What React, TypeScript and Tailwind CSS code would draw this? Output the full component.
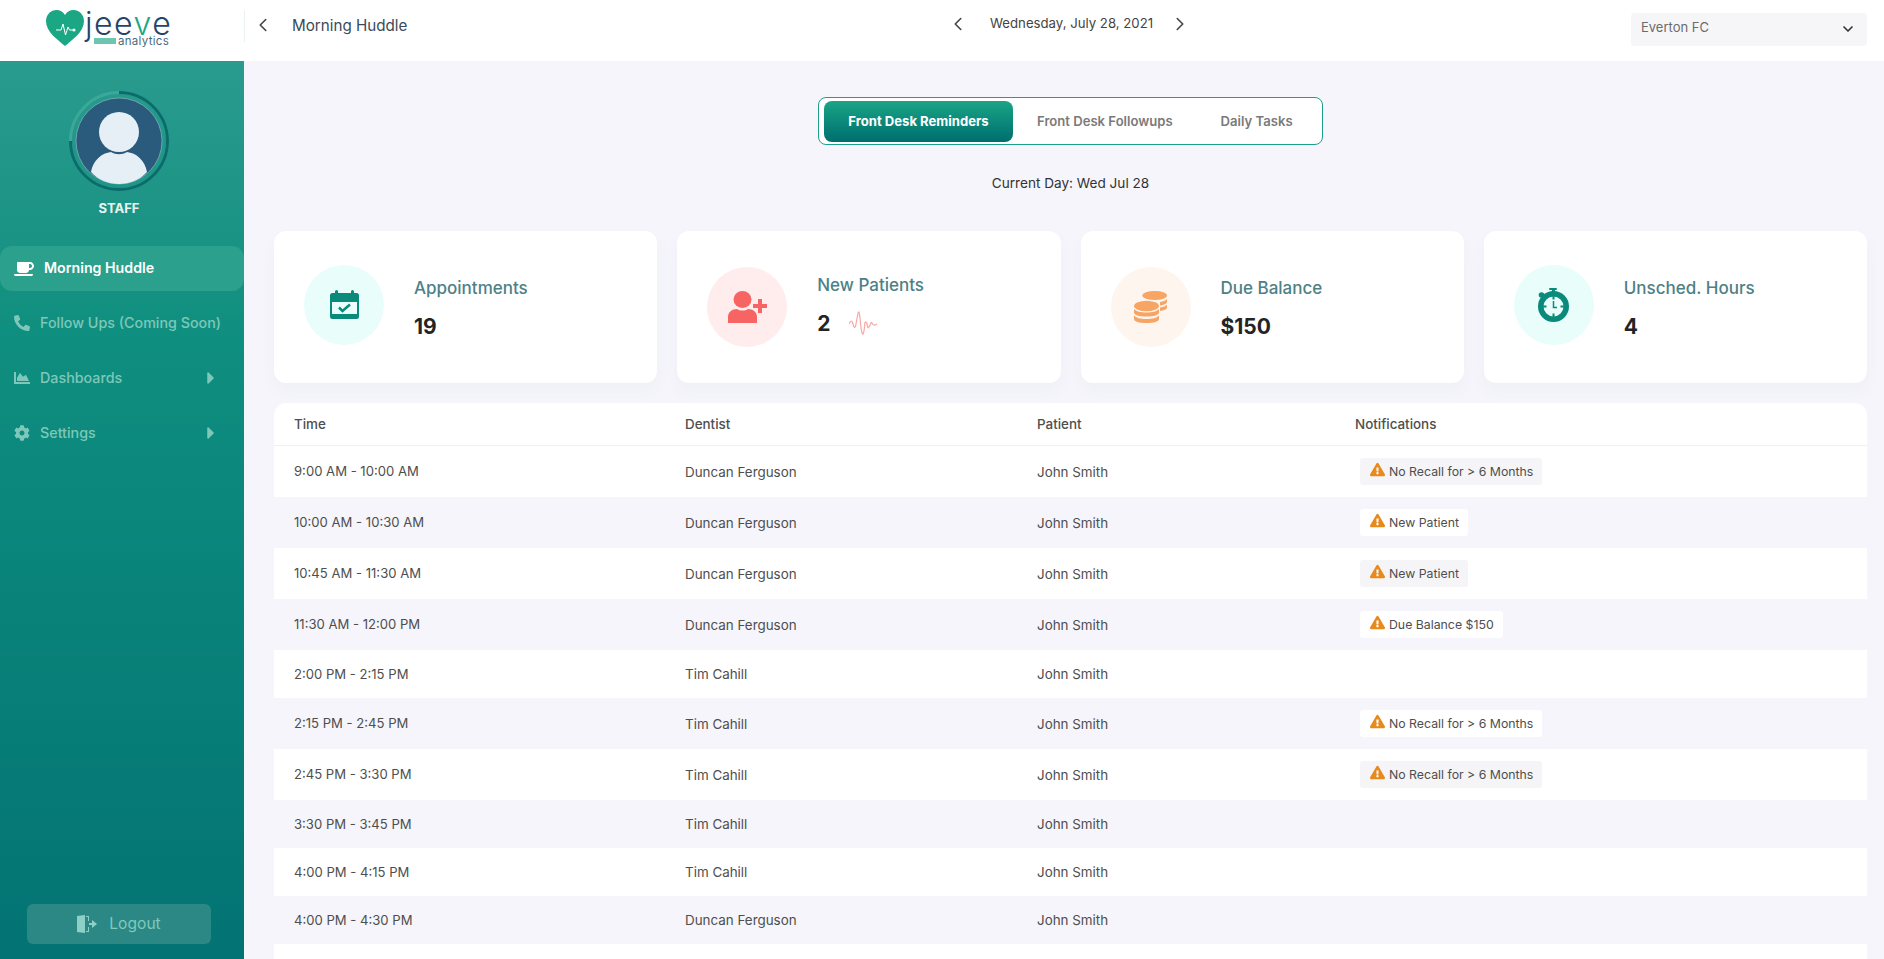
import React from 'react';
import { FaCoffee, FaPhoneAlt, FaChartArea, FaCog, FaCaretRight, FaExclamationTriangle } from 'react-icons/fa';
import { ChevronLeft, ChevronRight, ChevronDown } from 'lucide-react';

const rows = [
  { time: '9:00 AM - 10:00 AM', dentist: 'Duncan Ferguson', note: 'No Recall for > 6 Months' },
  { time: '10:00 AM - 10:30 AM', dentist: 'Duncan Ferguson', note: 'New Patient' },
  { time: '10:45 AM - 11:30 AM', dentist: 'Duncan Ferguson', note: 'New Patient' },
  { time: '11:30 AM - 12:00 PM', dentist: 'Duncan Ferguson', note: 'Due Balance $150' },
  { time: '2:00 PM - 2:15 PM', dentist: 'Tim Cahill', note: '' },
  { time: '2:15 PM - 2:45 PM', dentist: 'Tim Cahill', note: 'No Recall for > 6 Months' },
  { time: '2:45 PM - 3:30 PM', dentist: 'Tim Cahill', note: 'No Recall for > 6 Months' },
  { time: '3:30 PM - 3:45 PM', dentist: 'Tim Cahill', note: '' },
  { time: '4:00 PM - 4:15 PM', dentist: 'Tim Cahill', note: '' },
  { time: '4:00 PM - 4:30 PM', dentist: 'Duncan Ferguson', note: '' },
];

const Logo = () => (
  <div className="flex items-start pl-[46px]">
    <svg viewBox="0 0 38 37" className="w-[38px] h-[37px] mt-[10px] shrink-0">
      <path d="M19 36C12 30 0 22 0 11 0 4.500 5 0 10.500 0 14 0 17 1.800 19 5 21 1.800 24 0 27.500 0 33 0 38 4.500 38 11 38 22 26 30 19 36Z" fill="#1ba784" />
      <path d="M10 20h5l2-6 2.500 11 2.500-8 1.500 3h4" fill="none" stroke="#fff" strokeWidth="1" />
      <circle cx="28" cy="20" r="1.500" fill="#fff" />
    </svg>
    <div className="relative w-[92px] h-[61px] ml-[1px]">
      <span className="absolute left-0 top-[6px] text-[32px] leading-[36px] tracking-[1.500px] text-[#24456b] font-light">
        jee<span className="text-[#1ba784]">v</span>e
      </span>
      <div className="absolute left-[9px] top-[38px] w-[22px] h-[6px] bg-[#6cc5ae]" />
      <span className="absolute left-[33px] top-[35px] text-[11.500px] leading-[13px] tracking-[0.3px] text-[#4a6a80]">analytics</span>
    </div>
  </div>
);

const Avatar = () => (
  <svg viewBox="0 0 100 100" className="w-[100px] h-[100px]">
    <circle cx="50" cy="50" r="48.500" fill="none" stroke="#3ba899" strokeWidth="3" />
    <path d="M50 1.500A48.500 48.500 0 1 1 1.500 50" fill="none" stroke="#0b6c6c" strokeWidth="3" />
    <circle cx="50" cy="50" r="43" fill="#2a5a7c" stroke="#a9d3cc" strokeWidth="0.500" />
    <circle cx="50" cy="41" r="20" fill="#e6eff6" />
    <path d="M22 81C24 69 33 62 42 61 47 64 53 64 58 61 67 62 76 69 78 81 71 89 61 93 50 93 39 93 29 89 22 81Z" fill="#e6eff6" />
  </svg>
);

const NavItem = ({ icon, label, caret }: { icon: React.ReactNode; label: string; caret?: boolean }) => (
  <div className="flex items-center h-[55px] pl-[14px] pr-[23px] text-[#7dc8ba] text-[14.300px] font-medium whitespace-nowrap">
    <span className="w-[16px] flex justify-center text-[16px] mr-[10px]">{icon}</span>
    <span>{label}</span>
    {caret && <FaCaretRight className="ml-auto text-[20px]" />}
  </div>
);

const Sidebar = () => (
  <aside className="w-[244px] shrink-0 h-[898px] flex flex-col bg-gradient-to-b from-[#299b8e] via-[#0f8f7f] via-30% to-[#037373]">
    <div className="flex flex-col items-center pt-[30px] pr-[6px]">
      <Avatar />
      <div className="mt-[8px] text-[13px] leading-[18px] font-bold text-[#e8f5f2]">STAFF</div>
    </div>
    <div className="mt-[29px] flex items-center h-[45px] rounded-[12px] bg-[#2ba08c] pl-[14px] text-white text-[14.200px] font-semibold">
      <FaCoffee className="text-[20px] mr-[10px]" />
      <span className="-mt-[2px]">Morning Huddle</span>
    </div>
    <div className="mt-[4px]">
      <NavItem icon={<FaPhoneAlt />} label="Follow Ups (Coming Soon)" />
      <NavItem icon={<FaChartArea />} label="Dashboards" caret />
      <NavItem icon={<FaCog />} label="Settings" caret />
    </div>
    <div className="mt-auto mb-[15px] ml-[27px] w-[184px] h-[40px] rounded-[6px] bg-[#2c8885] flex items-center justify-center text-[#7fcabd] text-[15.600px]">
      <svg viewBox="0 0 20 18" className="w-[20px] h-[20px] mr-[12px]" fill="#8fd0c6">
        <path d="M0 1l8-1v18l-8-1z" />
        <path d="M9 1h3v5h-1V2H9zM9 16h2v-4h1v5H9zM12 8h3V5l5 4-5 4v-3h-3z" />
      </svg>
      <span>Logout</span>
    </div>
  </aside>
);

const CalendarIcon = () => (
  <svg viewBox="0 0 29 29" className="w-[29px] h-[29px]">
    <path d="M5 1.500a1.500 1.500 0 0 1 3 0V3h13V1.500a1.500 1.500 0 0 1 3 0V3h2.500A2.500 2.500 0 0 1 29 5.500v21a2.500 2.500 0 0 1-2.500 2.500h-24A2.500 2.500 0 0 1 0 26.500v-21A2.500 2.500 0 0 1 2.500 3H5z" fill="#0a8a7a" />
    <rect x="2" y="12" width="25" height="12" fill="#e9fdfb" />
    <path d="M9 17.500l3.500 3.500 7.500-6.500" fill="none" stroke="#0a8a7a" strokeWidth="2.500" />
  </svg>
);

const PatientIcon = () => (
  <svg viewBox="0 0 39 32" className="w-[39px] h-[32px]">
    <ellipse cx="14.500" cy="8.500" rx="9" ry="8.500" fill="#f76464" />
    <path d="M0 32V26C0 21 4 18 9 18 12 20 17 20 20 18 25 18 29 21 29 26V32Z" fill="#f76464" />
    <path d="M30 8h4v5h5v4h-5v5h-4v-5h-5v-4h5z" fill="#f76464" />
  </svg>
);

const CoinsIcon = () => (
  <svg viewBox="0 0 33 32" className="w-[33px] h-[32px]">
    <ellipse cx="20.700" cy="4.500" rx="12.300" ry="4.500" fill="#f6a565" />
    <path d="M26 11c3-.4 6-1.500 7-3v3c0 1.500-3 3-7 3.500zM26 16.500c3-.4 6-1.500 7-3v3c0 1.500-3 3-7 3.500z" fill="#f6a565" />
    <ellipse cx="12.500" cy="15" rx="12.500" ry="5.200" fill="#f6a565" />
    <path d="M0 18c2 2.500 7 3.500 12.500 3.500S23 20.500 25 18v3.500c0 2.500-5 4-12.500 4S0 24 0 21.500zM0 24.500c2 2.500 7 3.500 12.500 3.500S23 27 25 24.500V28c0 2.500-5 4-12.500 4S0 30.500 0 28z" fill="#f6a565" />
  </svg>
);

const StopwatchIcon = () => (
  <svg viewBox="0 0 31 34" className="w-[31px] h-[34px]">
    <rect x="11" y="0" width="8" height="2" rx="1" fill="#0a8a7a" />
    <rect x="14" y="1" width="3" height="3" fill="#0a8a7a" />
    <circle cx="3.500" cy="7" r="2.800" fill="#0a8a7a" />
    <circle cx="15.500" cy="18.500" r="12.750" fill="#e9fdfb" stroke="#0a8a7a" strokeWidth="5.500" />
    <path d="M15.500 13v6.500h3.500" fill="none" stroke="#0a8a7a" strokeWidth="1.500" />
    <path d="M15.500 8v3.500M15.500 25.500V29M5 18.500h3.500M22.500 18.500H26" stroke="#0a8a7a" strokeWidth="2" />
  </svg>
);

const Pulse = () => (
  <svg viewBox="0 0 28 24" className="w-[28px] h-[24px] ml-[19px] -mt-[2px]">
    <path d="M0 13c2-4 3-4 4 0s2 5 3 0 2-13 3-12 2 24 4 22 1-14 3-12 1 8 3 5 2-6 3-4 2 3 5 1" fill="none" stroke="#f9a8a8" strokeWidth="1.200" />
  </svg>
);

const StatCard = ({
  icon,
  circle,
  label,
  value,
  spark,
  offset,
  textOffset,
}: {
  icon: React.ReactNode;
  circle: string;
  label: string;
  value: string;
  spark?: boolean;
  offset: string;
  textOffset: string;
}) => (
  <div className="bg-white rounded-[12px] h-[152px] flex items-center pl-[30px] shadow-[0_8px_16px_rgba(90,90,140,0.04)]">
    <div className={`w-[80px] h-[80px] rounded-full flex items-center justify-center shrink-0 ${circle} ${offset}`}>{icon}</div>
    <div className={`ml-[30px] ${textOffset}`}>
      <div className="text-[17px] leading-[24px] text-[#4d8187] font-medium">{label}</div>
      <div className="mt-[15px] flex items-center text-[21px] leading-[24px] font-bold text-[#242424]">
        {value}
        {spark && <Pulse />}
      </div>
    </div>
  </div>
);

const Badge = ({ text, shaded }: { text: string; shaded: boolean }) => (
  <span className={`flex w-fit items-center h-[27px] pl-[10px] pr-[9px] rounded-[3px] text-[12.300px] text-[#4e4e4e] ${shaded ? 'bg-white' : 'bg-[#f5f5f8]'}`}>
    <FaExclamationTriangle className="text-[15px] text-[#e8891c] mr-[4px] -mt-[3px]" />
    <span className="mt-[2px]">{text}</span>
  </span>
);

export default function App() {
  return (
    <div className="h-screen overflow-hidden bg-[#f5f5fb] text-[#4e4e4e] [font-family:Inter,sans-serif]">
      <header className="h-[61px] bg-white flex items-center">
        <div className="w-[244px] shrink-0 h-[61px]">
          <Logo />
        </div>
        <div className="w-px h-[32px] bg-[#e9f2f0] -mt-[10px]" />
        <div className="w-[702px] flex items-center -mt-[10px]">
          <ChevronLeft className="w-[22px] h-[22px] text-[#444] ml-[7px]" strokeWidth={1.75} />
          <span className="ml-[18px] mt-[2px] text-[15.200px] text-[#3b4a5a]">Morning Huddle</span>
        </div>
        <div className="flex items-center -mt-[13px]">
          <ChevronLeft className="w-[22px] h-[22px] text-[#444]" strokeWidth={1.75} />
          <span className="ml-[21px] mr-[16px] text-[13.200px] text-[#444]">Wednesday, July 28, 2021</span>
          <ChevronRight className="w-[22px] h-[22px] text-[#444]" strokeWidth={1.75} />
        </div>
        <div className="ml-auto mr-[17px] w-[236px] h-[33px] rounded-[4px] bg-[#f6f6f8] flex items-center pl-[10px] pr-[11px] text-[13px] text-[#6b6b6b] -mt-[3px]">
          <span className="-mt-[3px]">Everton FC</span>
          <ChevronDown className="ml-auto w-[16px] h-[16px] text-[#333]" strokeWidth={2.5} />
        </div>
      </header>
      <div className="flex">
        <Sidebar />
        <main className="flex-1 pl-[30px] pr-[17px]">
          <div className="pt-[36px] flex justify-center">
            <div className="w-[505px] h-[48px] rounded-[8px] border border-[#1ba08a] bg-white flex items-center pl-[5px] text-[13.100px] font-semibold text-[#7a7a7a]">
              <div className="w-[189px] h-[41px] rounded-[8px] bg-gradient-to-b from-[#1aa586] to-[#006e6e] text-white font-bold flex items-center justify-center pt-[2px]">Front Desk Reminders</div>
              <div className="ml-[24px] pt-[2px]">Front Desk Followups</div>
              <div className="ml-[48px] pt-[2px]">Daily Tasks</div>
            </div>
          </div>
          <div className="mt-[28px] text-center text-[13.600px] leading-[20px] text-[#333]">Current Day: Wed Jul 28</div>
          <div className="mt-[38px] grid grid-cols-4 gap-[20px]">
            <StatCard circle="bg-[#e9fdfb]" offset="-mt-[5px]" textOffset="mt-[1px]" icon={<CalendarIcon />} label="Appointments" value="19" />
            <StatCard circle="bg-[#ffecec]" offset="" textOffset="-mt-[5px]" icon={<PatientIcon />} label="New Patients" value="2" spark />
            <StatCard circle="bg-[#fff5ef]" offset="" textOffset="mt-[1px]" icon={<CoinsIcon />} label="Due Balance" value="$150" />
            <StatCard circle="bg-[#e9fdfb]" offset="-mt-[5px]" textOffset="mt-[1px]" icon={<StopwatchIcon />} label="Unsched. Hours" value="4" />
          </div>
          <div className="mt-[20px] bg-white rounded-t-[12px] h-[600px] overflow-hidden">
            <table className="w-full table-fixed text-[13.400px] text-[#4e4e4e]">
              <colgroup>
                <col className="w-[391px]" />
                <col className="w-[352px]" />
                <col className="w-[318px]" />
                <col />
              </colgroup>
              <thead>
                <tr className="h-[42px] border-b border-[#f1f1f4] font-medium">
                  <td className="pl-[20px]">Time</td>
                  <td className="pl-[20px]">Dentist</td>
                  <td className="pl-[20px]">Patient</td>
                  <td className="pl-[20px]">Notifications</td>
                </tr>
              </thead>
              <tbody>
                {rows.map((row, i) => {
                  const shaded = i % 2 === 1;
                  return (
                    <tr key={i} className={`h-[48px] ${shaded ? 'bg-[#f5f5fb]' : 'bg-white'}`}>
                      <td className="pl-[20px] pt-[2px] text-[13.100px]">{row.time}</td>
                      <td className="pl-[20px] pt-[2px]">{row.dentist}</td>
                      <td className="pl-[20px] pt-[2px]">John Smith</td>
                      <td className="pl-[25px] py-[12px]">{row.note && <Badge text={row.note} shaded={shaded} />}</td>
                    </tr>
                  );
                })}
              </tbody>
            </table>
          </div>
        </main>
      </div>
    </div>
  );
}
